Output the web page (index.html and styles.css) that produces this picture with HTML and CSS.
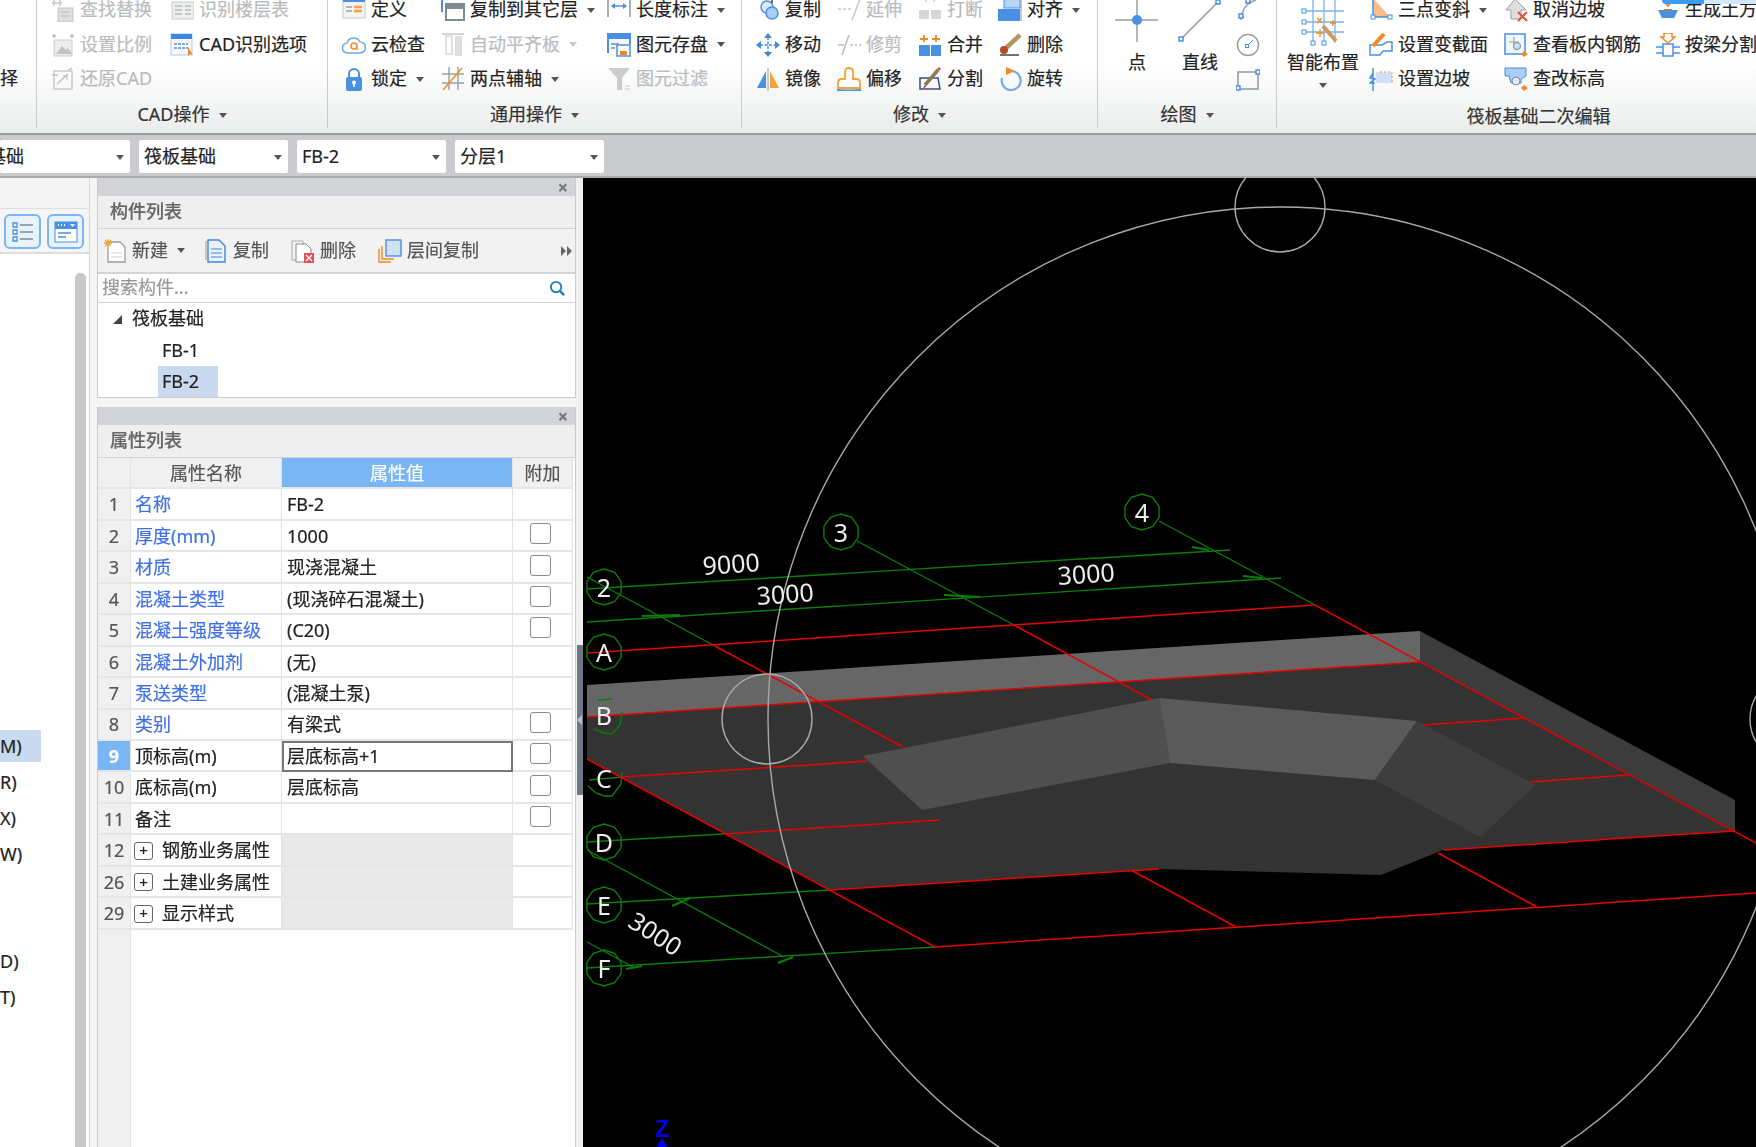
FILE: index.html
```html
<!DOCTYPE html>
<html lang="zh-CN">
<head>
<meta charset="utf-8">
<title>筏板基础</title>
<link rel="stylesheet" href="styles.css">
</head>
<body>
<svg class="defs" width="0" height="0">
  <symbol id="i-find" viewBox="0 0 24 24"><path d="M3 2v6M9 2v6M1 5h10" stroke="#c4c6c8" stroke-width="1.5"/><rect x="7" y="10" width="15" height="14" fill="#dcdedf" stroke="#c4c6c8"/><path d="M10 14h9M10 18h9" stroke="#b9bbbd"/></symbol>
  <symbol id="i-layer" viewBox="0 0 24 24"><rect x="2" y="4" width="22" height="17" fill="#eceded" stroke="#c9cbcd"/><path d="M5 8h7M5 12h7M5 16h7M15 8h6M15 12h6M15 16h6" stroke="#b9bbbd" stroke-width="1.5"/></symbol>
  <symbol id="i-scale" viewBox="0 0 24 24"><rect x="3" y="7" width="18" height="16" fill="#eceded" stroke="#c9cbcd"/><path d="M5 21l6-8 4 4 2-2 4 6z" fill="#c0c2c4"/><path d="M3 1v4M21 1v4M1 3h4M19 3h4" stroke="#bcbec0" stroke-width="1.5"/></symbol>
  <symbol id="i-restore" viewBox="0 0 24 24"><rect x="3" y="4" width="18" height="18" fill="none" stroke="#c9cbcd" stroke-width="1.5"/><path d="M1 8h6M17 4l4-3M6 17l11-10" stroke="#c0c2c4" stroke-width="1.5"/><path d="M12 9h4v4" fill="none" stroke="#b9bbbd"/></symbol>
  <symbol id="i-cad" viewBox="0 0 24 24"><rect x="1" y="1" width="21" height="21" fill="#f7f9fb" stroke="#a9cdf5"/><rect x="1" y="1" width="21" height="5" fill="#3f86dc"/><path d="M4 11h14M4 15h14" stroke="#7fa9d8" stroke-width="2" stroke-dasharray="3 1"/><path d="M18 14v9l2-2 3 1z" fill="#f08a24"/></symbol>
  <symbol id="i-def" viewBox="0 0 24 24"><rect x="1" y="-2" width="22" height="22" fill="#f3f3f3" stroke="#c5c8cb"/><rect x="1" y="-2" width="22" height="6" fill="#4a90e2"/><path d="M4 9h6M4 13h6" stroke="#9a9fa4" stroke-width="1.5"/><path d="M12 9h8M12 13h8" stroke="#f2a33a" stroke-width="2.5"/></symbol>
  <symbol id="i-cplayer" viewBox="0 0 24 24"><path d="M1 14V1h17" fill="none" stroke="#4a90e2" stroke-width="2"/><rect x="5" y="6" width="18" height="16" fill="#fff" stroke="#7e8a94" stroke-width="2"/><rect x="5" y="6" width="18" height="5" fill="#7e8a94"/></symbol>
  <symbol id="i-dim" viewBox="0 0 24 24"><path d="M1 0v19M23 0v19" stroke="#8f979e" stroke-width="1.5"/><path d="M5 8h14" stroke="#4a90e2" stroke-width="1.5"/><path d="M4 8l4-3v6zM20 8l-4-3v6z" fill="#4a90e2"/></symbol>
  <symbol id="i-cloud" viewBox="0 0 24 24"><path d="M6 20a5 5 0 0 1-1-10 7 7 0 0 1 13-1 5.500 5.500 0 0 1 0 11z" fill="#fff" stroke="#6eaeea" stroke-width="1.6"/><circle cx="12" cy="13" r="3" fill="none" stroke="#f08a24" stroke-width="1.5"/><path d="M14 15l2 2" stroke="#f08a24" stroke-width="1.5"/></symbol>
  <symbol id="i-autoal" viewBox="0 0 24 24"><path d="M1 1h22" stroke="#d4d6d7" stroke-width="2"/><rect x="5" y="3" width="6" height="18" fill="#fff" stroke="#d4d6d7" stroke-width="1.5"/><rect x="14" y="3" width="7" height="20" fill="#dcdedf"/></symbol>
  <symbol id="i-save" viewBox="0 0 24 24"><path d="M1 20V1h22v10" fill="#f7f9fb" stroke="#4a90e2" stroke-width="2"/><rect x="1" y="1" width="22" height="5" fill="#4a90e2"/><path d="M4 11h8M4 15h4" stroke="#7e8a94" stroke-width="1.5"/><rect x="10" y="12" width="13" height="11" fill="#fff" stroke="#4a90e2" stroke-width="1.5"/><rect x="13" y="18" width="7" height="4" fill="#f08a24"/></symbol>
  <symbol id="i-lock" viewBox="0 0 24 24"><path d="M7 11V7a5 5 0 0 1 10 0v4" fill="none" stroke="#4a90e2" stroke-width="2"/><rect x="4" y="10" width="16" height="14" rx="2" fill="#4a90e2"/><circle cx="12" cy="15.500" r="2" fill="#fff"/><path d="M12 16v4" stroke="#fff" stroke-width="1.500"/></symbol>
  <symbol id="i-axis" viewBox="0 0 24 24"><path d="M8 0L8 23M17 0V23M1 7h22M1 16h22" stroke="#9aa0a6" stroke-width="1.400"/><path d="M2 23L21 1" stroke="#f08a24" stroke-width="1.500"/></symbol>
  <symbol id="i-filter" viewBox="0 0 24 24"><path d="M1 1h22l-8 10v12h-5V11z" fill="#c9cbcd"/><path d="M18 19h5M18 22h5" stroke="#d4d6d7" stroke-width="1.500"/></symbol>
  <symbol id="i-copy" viewBox="0 0 24 24"><circle cx="11" cy="9" r="6" fill="#dbe9f8" stroke="#4a90e2" stroke-width="1.500"/><circle cx="16" cy="15" r="6" fill="#a9cdf5" stroke="#4a90e2" stroke-width="1.500"/><path d="M2 0h3M16 0v5" stroke="#444" stroke-width="1.500"/></symbol>
  <symbol id="i-move" viewBox="0 0 24 24"><path d="M12 4v16M4 12h16" stroke="#4a90e2" stroke-width="1.500" stroke-dasharray="3 1.500"/><path d="M12 0l4 5H8zM12 24l4-5H8zM0 12l5-4v8zM24 12l-5-4v8z" fill="#3f86dc"/></symbol>
  <symbol id="i-mirror" viewBox="0 0 24 24"><path d="M10 4v17H1z" fill="#4a90e2"/><path d="M14 4v17h9z" fill="#f2a33a"/><path d="M12 1v23" stroke="#8f979e"/></symbol>
  <symbol id="i-ext" viewBox="0 0 24 24"><path d="M1 11h3M6 11h3M11 11h3" stroke="#c9cbcd" stroke-width="1.500"/><path d="M15 22L23 1" stroke="#c4c6c8" stroke-width="1.500"/></symbol>
  <symbol id="i-trim" viewBox="0 0 24 24"><path d="M1 12h6M13 12h3M18 12h2M22 12h2" stroke="#bcbec0" stroke-width="1.500"/><path d="M5 22L12 2" stroke="#bcbec0" stroke-width="1.500"/></symbol>
  <symbol id="i-offset" viewBox="0 0 24 24"><path d="M1 21v-5q0-4 4-4h3V5q0-4 4-4t4 4v7h3q4 0 4 4v5z" fill="#fff" stroke="#f2a33a" stroke-width="1.800"/><path d="M0 23q5 1 24 0" fill="none" stroke="#4a90e2" stroke-width="2"/></symbol>
  <symbol id="i-break" viewBox="0 0 24 24"><path d="M2 1h4M18 1h4M9 4l-3-3M15 4l3-3" stroke="#d4d6d7" stroke-width="1.500"/><rect x="1" y="12" width="10" height="9" fill="#d4d6d7"/><rect x="13" y="12" width="10" height="9" fill="#d4d6d7"/></symbol>
  <symbol id="i-merge" viewBox="0 0 24 24"><rect x="1" y="12" width="11" height="11" fill="#4a90e2"/><rect x="13" y="12" width="10" height="11" fill="#4a90e2"/><path d="M6 2v7M2 6h8M18 2v7M14 6h8" stroke="#f08a24" stroke-width="1.800"/></symbol>
  <symbol id="i-split" viewBox="0 0 24 24"><path d="M2 11h18l2 11H2z" fill="none" stroke="#3d4d80" stroke-width="1.500"/><path d="M7 18L20 3" stroke="#8a7a60" stroke-width="3.500"/><path d="M7 18l-2 3 3-1z" fill="#444"/><path d="M20 3l2-2" stroke="#e0563e" stroke-width="3"/></symbol>
  <symbol id="i-align" viewBox="0 0 24 24"><rect x="6" y="-4" width="16" height="14" fill="#b9d5f6" stroke="#4a90e2"/><rect x="0" y="11" width="22" height="12" fill="#4a90e2"/><path d="M23 -4v27" stroke="#8f979e"/></symbol>
  <symbol id="i-del" viewBox="0 0 24 24"><path d="M8 15L22 2" stroke="#b4955f" stroke-width="4.500"/><circle cx="6" cy="17" r="4" fill="#b5492a"/><path d="M2 22h19" stroke="#444" stroke-width="1.500"/></symbol>
  <symbol id="i-rot" viewBox="0 0 24 24"><path d="M13 4a9.500 9.500 0 1 1-9 7" fill="none" stroke="#6eaeea" stroke-width="2.200"/><path d="M8 0l9 4-9 4z" fill="#f08a24"/></symbol>
  <symbol id="i-arc" viewBox="0 0 24 24"><path d="M5 22Q6 6 20 2" fill="none" stroke="#9aa0a6" stroke-width="1.500"/><rect x="3" y="16" width="4" height="4" fill="#fff" stroke="#4a90e2" stroke-width="1.500"/><rect x="10" y="1" width="4" height="4" fill="#fff" stroke="#4a90e2" stroke-width="1.500"/></symbol>
  <symbol id="i-circ" viewBox="0 0 24 24"><circle cx="12" cy="12" r="10.500" fill="none" stroke="#9aa0a6" stroke-width="1.500"/><path d="M11 13l6-6" stroke="#4a90e2"/><rect x="9.500" y="11.500" width="3" height="3" fill="#fff" stroke="#4a90e2"/></symbol>
  <symbol id="i-rect" viewBox="0 0 24 24"><path d="M2 5h20v17H2z" fill="none" stroke="#8f979e" stroke-width="1.500"/><rect x="0" y="19" width="4" height="4" fill="#fff" stroke="#4a90e2" stroke-width="1.500"/><rect x="20" y="3" width="4" height="4" fill="#fff" stroke="#4a90e2" stroke-width="1.500"/></symbol>
  <symbol id="i-tri" viewBox="0 0 24 24"><path d="M4 0l17 19H4z" fill="#f9bd8c"/><path d="M4 0v19h17" fill="none" stroke="#4a90e2" stroke-width="1.500"/><rect x="2" y="17" width="4" height="4" fill="#fff" stroke="#4a90e2"/><rect x="19" y="17" width="4" height="4" fill="#fff" stroke="#4a90e2"/></symbol>
  <symbol id="i-sec" viewBox="0 0 24 24"><path d="M1 22V12h12l5-3h5v9h-9l-3 4z" fill="#fff" stroke="#4a90e2" stroke-width="1.500"/><path d="M4 13L15 1" stroke="#f08a24" stroke-width="4"/></symbol>
  <symbol id="i-edge" viewBox="0 0 24 24"><path d="M4 1v23M4 6l-3 5 5 1-5 4h5" fill="none" stroke="#4a90e2" stroke-width="1.500"/><path d="M7 5l16 1v10H7z" fill="#cfe2f8"/><path d="M11 5h12v11" fill="none" stroke="#f08a24" stroke-dasharray="2 2"/></symbol>
  <symbol id="i-uncut" viewBox="0 0 24 24"><path d="M2 12L11 1l11 11h-5v9H7v-9z" fill="#dcdedf" stroke="#9aa0a6"/><path d="M14 14l9 9M23 14l-9 9" stroke="#e0563e" stroke-width="2.200"/></symbol>
  <symbol id="i-view" viewBox="0 0 24 24"><rect x="1" y="1" width="20" height="20" fill="#f3f7fb" stroke="#4a90e2" stroke-width="1.500"/><path d="M5 9h10M10 4v10q0 3 3 3" fill="none" stroke="#8f979e"/><circle cx="13" cy="13" r="3.500" fill="#cfe2f8" stroke="#7e8a94"/><path d="M20 18l4 3-4 3-3-3z" fill="#f08a24"/></symbol>
  <symbol id="i-chk" viewBox="0 0 24 24"><path d="M1 1h21v8l-5 3v4H7l-2-7H1z" fill="#a9cdf5" stroke="#4a90e2"/><circle cx="12" cy="14" r="4" fill="#dbe9f8" stroke="#7e8a94"/><path d="M20 18l4 3-4 3-3-3z" fill="#f08a24"/></symbol>
  <symbol id="i-earth" viewBox="0 0 24 24"><path d="M12 -2v7M8 3l4 5 4-5" fill="none" stroke="#f08a24" stroke-width="2"/><path d="M2 12h20l-4 8H6z" fill="#4a90e2"/><rect x="8" y="11" width="8" height="3" fill="#7e8a94"/></symbol>
  <symbol id="i-beam" viewBox="0 0 24 24"><path d="M8 0h8v4h3l-7 6-7-6h3z" fill="#fff" stroke="#f08a24" stroke-width="1.500"/><rect x="7" y="11" width="10" height="12" fill="#fff" stroke="#4a90e2" stroke-width="1.500"/><path d="M0 14h7M0 20h7M17 14h7M17 20h7" stroke="#4a90e2" stroke-width="1.500"/></symbol>
  <symbol id="i-new" viewBox="0 0 24 24"><path d="M5 3h12l5 5v15H5z" fill="#fff" stroke="#9b9b9b" stroke-width="1.300"/><path d="M8 14h11M8 18h11" stroke="#cfcfcf"/><path d="M5 0v8M1 4h8M2 1l6 6M8 1L2 7" stroke="#f2a33a" stroke-width="1.300"/></symbol>
  <symbol id="i-pcopy" viewBox="0 0 24 24"><path d="M2 2v19" stroke="#9b9b9b"/><path d="M4 1h11l6 6v16H4z" fill="#eaf3fd" stroke="#3f86dc" stroke-width="1.400"/><path d="M7 10h11M7 14h11M7 18h11" stroke="#3f86dc" stroke-width="1.200"/></symbol>
  <symbol id="i-pdel" viewBox="0 0 24 24"><path d="M1 2h11v19H1z" fill="#f4f4f4" stroke="#aaa"/><path d="M5 5h10l5 5v13H5z" fill="#fff" stroke="#888"/><rect x="13" y="14" width="10" height="10" fill="#e0505a"/><path d="M15 16l6 6M21 16l-6 6" stroke="#fff" stroke-width="1.300"/></symbol>
  <symbol id="i-pfloor" viewBox="0 0 24 24"><path d="M1 10v13h12" fill="none" stroke="#f08a24" stroke-width="1.400"/><path d="M4 7v13h12" fill="none" stroke="#f08a24" stroke-width="1.400"/><rect x="8" y="1" width="15" height="16" fill="#cfe2f8" stroke="#4a90e2" stroke-width="1.400"/></symbol>
</svg>

<header class="ribbon">
  <div class="tab-hint"></div>
  <section class="grp g0">
    <div class="cols"><div class="col c0"><div class="it"></div><div class="it"></div><div class="it"><span>择</span></div></div></div>
  </section>
  <section class="grp g1">
    <div class="cols">
      <div class="col w119">
        <div class="it off"><svg class="ico"><use href="#i-find"/></svg><span>查找替换</span></div>
        <div class="it off"><svg class="ico"><use href="#i-scale"/></svg><span>设置比例</span></div>
        <div class="it off"><svg class="ico"><use href="#i-restore"/></svg><span>还原CAD</span></div>
      </div>
      <div class="col">
        <div class="it off"><svg class="ico"><use href="#i-layer"/></svg><span>识别楼层表</span></div>
        <div class="it"><svg class="ico"><use href="#i-cad"/></svg><span>CAD识别选项</span></div>
      </div>
    </div>
    <div class="lbl">CAD操作<i class="cr"></i></div>
  </section>
  <section class="grp g2">
    <div class="cols">
      <div class="col w99">
        <div class="it"><svg class="ico"><use href="#i-def"/></svg><span>定义</span></div>
        <div class="it"><svg class="ico"><use href="#i-cloud"/></svg><span>云检查</span></div>
        <div class="it"><svg class="ico"><use href="#i-lock"/></svg><span>锁定</span><i class="cr"></i></div>
      </div>
      <div class="col w166">
        <div class="it"><svg class="ico"><use href="#i-cplayer"/></svg><span>复制到其它层</span><i class="cr"></i></div>
        <div class="it off"><svg class="ico"><use href="#i-autoal"/></svg><span>自动平齐板</span><i class="cr"></i></div>
        <div class="it"><svg class="ico"><use href="#i-axis"/></svg><span>两点辅轴</span><i class="cr"></i></div>
      </div>
      <div class="col">
        <div class="it"><svg class="ico"><use href="#i-dim"/></svg><span>长度标注</span><i class="cr"></i></div>
        <div class="it"><svg class="ico"><use href="#i-save"/></svg><span>图元存盘</span><i class="cr"></i></div>
        <div class="it off"><svg class="ico"><use href="#i-filter"/></svg><span>图元过滤</span></div>
      </div>
    </div>
    <div class="lbl">通用操作<i class="cr"></i></div>
  </section>
  <section class="grp g3">
    <div class="cols">
      <div class="col w81">
        <div class="it"><svg class="ico"><use href="#i-copy"/></svg><span>复制</span></div>
        <div class="it"><svg class="ico"><use href="#i-move"/></svg><span>移动</span></div>
        <div class="it"><svg class="ico"><use href="#i-mirror"/></svg><span>镜像</span></div>
      </div>
      <div class="col w81">
        <div class="it off"><svg class="ico"><use href="#i-ext"/></svg><span>延伸</span></div>
        <div class="it off"><svg class="ico"><use href="#i-trim"/></svg><span>修剪</span></div>
        <div class="it"><svg class="ico"><use href="#i-offset"/></svg><span>偏移</span></div>
      </div>
      <div class="col w80">
        <div class="it off"><svg class="ico"><use href="#i-break"/></svg><span>打断</span></div>
        <div class="it"><svg class="ico"><use href="#i-merge"/></svg><span>合并</span></div>
        <div class="it"><svg class="ico"><use href="#i-split"/></svg><span>分割</span></div>
      </div>
      <div class="col">
        <div class="it"><svg class="ico"><use href="#i-align"/></svg><span>对齐</span><i class="cr"></i></div>
        <div class="it"><svg class="ico"><use href="#i-del"/></svg><span>删除</span></div>
        <div class="it"><svg class="ico"><use href="#i-rot"/></svg><span>旋转</span></div>
      </div>
    </div>
    <div class="lbl">修改<i class="cr"></i></div>
  </section>
  <section class="grp g4">
    <div class="cols">
      <div class="big w58">
        <svg class="big-ico" viewBox="0 0 58 55"><path d="M7 27h43M29 7v42" stroke="#9aa0a6" stroke-width="1.500"/><circle cx="29" cy="27" r="5" fill="#4a90e2"/></svg>
        <span>点</span>
      </div>
      <div class="big w68">
        <svg class="big-ico" viewBox="0 0 68 55"><path d="M15 46L52 9" stroke="#8f979e" stroke-width="1.500"/><rect x="13" y="44" width="4" height="4" fill="#fff" stroke="#4a90e2" stroke-width="1.500"/><rect x="50" y="7" width="4" height="4" fill="#fff" stroke="#4a90e2" stroke-width="1.500"/></svg>
        <span>直线</span>
      </div>
      <div class="col shift2">
        <div class="it"><svg class="ico"><use href="#i-arc"/></svg></div>
        <div class="it"><svg class="ico"><use href="#i-circ"/></svg></div>
        <div class="it"><svg class="ico"><use href="#i-rect"/></svg></div>
      </div>
    </div>
    <div class="lbl">绘图<i class="cr"></i></div>
  </section>
  <section class="grp g5">
    <div class="cols">
      <div class="big w92">
        <svg class="big-ico" viewBox="0 0 92 55"><path d="M36 7v43M47 7v43M58 7v43M26 18h41M26 29h41M26 39h41" stroke="#7db2ec" stroke-width="1.300"/><path d="M46 33l13 15" stroke="#c89a62" stroke-width="4"/><path d="M40 25l5 5M45 25l-5 5M39 40h8M43 36v8M53 30h6M56 27v6" stroke="#f08a24" stroke-width="1.300"/><rect x="25" y="16" width="4" height="4" fill="#fff" stroke="#4a90e2"/><rect x="25" y="27" width="4" height="4" fill="#fff" stroke="#4a90e2"/><rect x="25" y="37" width="4" height="4" fill="#fff" stroke="#4a90e2"/><rect x="34" y="48" width="4" height="4" fill="#fff" stroke="#4a90e2"/><rect x="45" y="48" width="4" height="4" fill="#fff" stroke="#4a90e2"/></svg>
        <span>智能布置</span>
        <i class="cr big-cr"></i>
      </div>
      <div class="col w135">
        <div class="it"><svg class="ico"><use href="#i-tri"/></svg><span>三点变斜</span><i class="cr"></i></div>
        <div class="it"><svg class="ico"><use href="#i-sec"/></svg><span>设置变截面</span></div>
        <div class="it"><svg class="ico"><use href="#i-edge"/></svg><span>设置边坡</span></div>
      </div>
      <div class="col w152">
        <div class="it"><svg class="ico"><use href="#i-uncut"/></svg><span>取消边坡</span></div>
        <div class="it"><svg class="ico"><use href="#i-view"/></svg><span>查看板内钢筋</span></div>
        <div class="it"><svg class="ico"><use href="#i-chk"/></svg><span>查改标高</span></div>
      </div>
      <div class="col">
        <div class="it"><svg class="ico"><use href="#i-earth"/></svg><span>生成土方</span></div>
        <div class="it"><svg class="ico"><use href="#i-beam"/></svg><span>按梁分割</span></div>
      </div>
    </div>
    <div class="lbl lbl-low">筏板基础二次编辑</div>
  </section>
</header>

<nav class="combos">
  <div class="combo first"><span class="clip">基础</span><i class="cr"></i></div>
  <div class="combo"><span>筏板基础</span><i class="cr"></i></div>
  <div class="combo"><span>FB-2</span><i class="cr"></i></div>
  <div class="combo"><span>分层1</span><i class="cr"></i></div>
</nav>

<main class="work">
  <aside class="side">
    <div class="side-top"></div>
    <div class="side-btns">
      <button class="sbtn" type="button"><svg viewBox="0 0 24 24" width="24" height="24"><path d="M9 5h13M9 12h13M9 19h13" stroke="#7e8a94" stroke-width="1.300"/><path d="M2 3h4v4H2zM2 10h4v4H2zM2 17h4v4H2z" fill="none" stroke="#4a90e2" stroke-width="1.300"/></svg></button>
      <button class="sbtn" type="button"><svg viewBox="0 0 24 24" width="24" height="24"><rect x="1" y="2" width="22" height="20" fill="#fff" stroke="#4a90e2"/><rect x="1" y="2" width="22" height="7" fill="#4a90e2"/><path d="M4 5h1M7 5h1M10 5h1" stroke="#fff" stroke-width="2"/><path d="M16 4h5l-2.500 3z" fill="#fff"/><path d="M4 13h13M4 17h8" stroke="#4a90e2" stroke-width="1.500"/></svg></button>
    </div>
    <div class="side-body">
      <ul class="side-list">
        <li class="sel">M)</li>
        <li>R)</li>
        <li>X)</li>
        <li>W)</li>
        <li class="gap"></li>
        <li>D)</li>
        <li>T)</li>
      </ul>
      <div class="side-scroll"></div>
    </div>
  </aside>

  <div class="panels">
    <section class="panel p-top">
      <div class="ptitle"><span class="x">×</span></div>
      <h2 class="phead">构件列表</h2>
      <div class="ptools">
        <div class="tool t-new"><svg class="tico"><use href="#i-new"/></svg><span>新建</span><i class="cr"></i></div>
        <div class="tool t-cp"><svg class="tico"><use href="#i-pcopy"/></svg><span>复制</span></div>
        <div class="tool t-del"><svg class="tico"><use href="#i-pdel"/></svg><span>删除</span></div>
        <div class="tool"><svg class="tico"><use href="#i-pfloor"/></svg><span>层间复制</span></div>
        <svg class="more" viewBox="0 0 12 10" width="12" height="10"><path d="M0 0l5 5-5 5zM6 0l5 5-5 5z" fill="#666"/></svg>
      </div>
      <div class="psearch"><span>搜索构件...</span>
        <svg viewBox="0 0 18 18" width="17" height="17"><circle cx="7.500" cy="7.500" r="5.500" fill="none" stroke="#1d7fc4" stroke-width="2"/><path d="M11.500 11.500L16 16" stroke="#1d7fc4" stroke-width="2.500"/></svg>
      </div>
      <div class="tree">
        <div class="tree-root"><i class="tri"></i><span>筏板基础</span></div>
        <div class="tree-leaf"><span>FB-1</span></div>
        <div class="tree-leaf"><span class="on">FB-2</span></div>
      </div>
    </section>

    <section class="panel p-bot">
      <div class="ptitle"><span class="x">×</span></div>
      <h2 class="phead">属性列表</h2>
      <div class="ptable">
        <div class="grid">
          <div class="c n hd"></div><div class="c hd ctr">属性名称</div><div class="c hd-on ctr">属性值</div><div class="c hd ctr">附加</div>

          <div class="c n">1</div><div class="c nm lk">名称</div><div class="c v">FB-2</div><div class="c"></div>
          <div class="c n">2</div><div class="c nm lk">厚度(mm)</div><div class="c v">1000</div><div class="c ck"><input type="checkbox"></div>
          <div class="c n">3</div><div class="c nm lk">材质</div><div class="c v">现浇混凝土</div><div class="c ck"><input type="checkbox"></div>
          <div class="c n">4</div><div class="c nm lk">混凝土类型</div><div class="c v">(现浇碎石混凝土)</div><div class="c ck"><input type="checkbox"></div>
          <div class="c n">5</div><div class="c nm lk">混凝土强度等级</div><div class="c v">(C20)</div><div class="c ck"><input type="checkbox"></div>
          <div class="c n">6</div><div class="c nm lk">混凝土外加剂</div><div class="c v">(无)</div><div class="c"></div>
          <div class="c n">7</div><div class="c nm lk">泵送类型</div><div class="c v">(混凝土泵)</div><div class="c"></div>
          <div class="c n">8</div><div class="c nm lk">类别</div><div class="c v">有梁式</div><div class="c ck"><input type="checkbox"></div>
          <div class="c n n-on">9</div><div class="c nm">顶标高(m)</div><div class="c v v-on">层底标高+1</div><div class="c ck"><input type="checkbox"></div>
          <div class="c n">10</div><div class="c nm">底标高(m)</div><div class="c v">层底标高</div><div class="c ck"><input type="checkbox"></div>
          <div class="c n">11</div><div class="c nm">备注</div><div class="c v"></div><div class="c ck"><input type="checkbox"></div>
          <div class="c n">12</div><div class="c nm ex"><i class="plus">+</i>钢筋业务属性</div><div class="c v gr"></div><div class="c"></div>
          <div class="c n">26</div><div class="c nm ex"><i class="plus">+</i>土建业务属性</div><div class="c v gr"></div><div class="c"></div>
          <div class="c n">29</div><div class="c nm ex"><i class="plus">+</i>显示样式</div><div class="c v gr"></div><div class="c"></div>
        </div>
        <div class="tail"><div class="tail-n"></div></div>
      </div>
    </section>
  </div>

  <div class="split"><div class="split-h"><i></i></div></div>

  <div class="view">
    <svg class="scene" viewBox="583 178 1173 969" width="1173" height="969">
      <defs>
        <polygon id="hub" points="0,-18 10.600,-14.600 17.100,-5.600 17.100,5.600 10.600,14.600 0,18 -10.600,14.600 -17.100,5.600 -17.100,-5.600 -10.600,-14.600"/>
      </defs>
      <g class="solid">
        <path fill="#666" d="M587 685L1420 631V662L587 717Z"/>
        <path fill="#3c3c3c" d="M1420 631L1735 800V831L1420 662Z"/>
        <path fill="#333" d="M587 717L1420 662L1735 831L1443 850L1381 875L1159 869L830 890L587 759Z"/>
        <path fill="#4f4f4f" d="M863 756L1159 698L1170 763L922 810Z"/>
        <path fill="#5a5a5a" d="M1159 698L1417 721L1375 780L1170 763Z"/>
        <path fill="#3e3e3e" d="M1417 721L1536 785L1480 837L1375 780Z"/>
      </g>
      <g class="green">
        <path d="M587 589L1230 550"/>
        <path d="M587 622L1281 578"/>
        <path d="M587 577L713 645"/>
        <path d="M857 541L1014 625"/>
        <path d="M1159 521L1315 605"/>
        <path d="M587 842L723 834"/>
        <path d="M587 904L830 890"/>
        <path d="M587 968L935 947"/>
        <path d="M587 850L784 957"/>
        <path d="M587 942L633 967"/>
        <path d="M589 780L622 777"/>
      </g>
      <g class="green tick">
        <path d="M1192 547L1209 550"/>
        <path d="M1243 576L1262 578"/>
        <path d="M944 595L980 597"/>
        <path d="M642 616L680 615"/>
        <path d="M672 906L690 898"/>
        <path d="M778 963L793 957"/>
        <path d="M626 969L642 966"/>
      </g>
      <g class="red">
        <path d="M587 653L1315 605"/>
        <path d="M587 717L1420 662"/>
        <path d="M622 777L868 761"/>
        <path d="M1423 725L1525 718"/>
        <path d="M723 834L940 820"/>
        <path d="M1529 782L1629 775"/>
        <path d="M830 890L1159 869"/>
        <path d="M1443 850L1735 831"/>
        <path d="M935 947L1756 893"/>
        <path d="M713 645L903 747"/>
        <path d="M1014 625L1152 700"/>
        <path d="M1315 605L1756 843"/>
        <path d="M587 759L935 947"/>
        <path d="M1131 870L1236 927"/>
        <path d="M1438 853L1537 907"/>
      </g>
      <g class="white-lines">
        <circle cx="1280" cy="719" r="512"/>
        <circle cx="767" cy="719" r="45"/>
        <circle cx="1280" cy="207" r="45"/>
        <circle cx="1795" cy="719" r="45"/>
      </g>
      <g class="axes">
        <use href="#hub" x="604" y="587"/>
        <use href="#hub" x="604" y="652"/>
        <path d="M598 700L612 699M622 712L620 725L612 734L604 733L594 729"/>
        <path d="M622 772L621 784L612 796L604 796L596 793L588 786"/>
        <use href="#hub" x="604" y="842"/>
        <use href="#hub" x="604" y="905"/>
        <use href="#hub" x="604" y="968"/>
        <use href="#hub" x="841" y="532"/>
        <use href="#hub" x="1142" y="512"/>
      </g>
      <g class="labels">
        <text x="604" y="587">2</text>
        <text x="604" y="652">A</text>
        <text x="604" y="715">B</text>
        <text x="604" y="778">C</text>
        <text x="604" y="842">D</text>
        <text x="604" y="905">E</text>
        <text x="604" y="968">F</text>
        <text x="841" y="532">3</text>
        <text x="1142" y="512">4</text>
        <text x="731" y="563" transform="rotate(-4 731 563)">9000</text>
        <text x="785" y="593" transform="rotate(-4 785 593)">3000</text>
        <text x="1086" y="573" transform="rotate(-4 1086 573)">3000</text>
        <text x="656" y="933" transform="rotate(33 656 933)">3000</text>
      </g>
      <text class="zlab" x="662" y="1128">Z</text>
      <path class="zcone" d="M662 1138L668 1147H656Z"/>
    </svg>
  </div>
</main>
</body>
</html>
```
FILE: styles.css
```css
* { box-sizing: border-box; }
html, body { margin: 0; height: 100%; }
body {
  width: 1756px;
  height: 1147px;
  overflow: hidden;
  display: flex;
  flex-direction: column;
  background: #fff;
  color: #222;
  font: 18px/1.2 "Noto Sans", "Noto Sans CJK SC", sans-serif;
  -webkit-text-stroke: 0.2px;
  filter: blur(0.45px);
}
.defs { position: absolute; }
i { font-style: normal; }

/* ribbon */
.ribbon {
  position: relative;
  display: flex;
  height: 135px;
  flex: none;
  overflow: hidden;
  background: linear-gradient(#fff 0, #fff 62px, #ebeded 133px);
  border-bottom: 2px solid #9b9d9f;
}
.tab-hint {
  position: absolute;
  top: 0; left: 1662px; right: 0;
  height: 4px;
  background: linear-gradient(90deg, #3d9bf0 45%, #d4e8fb 45%);
  border-radius: 0 0 0 5px;
}
.grp {
  flex: none;
  display: flex;
  flex-direction: column;
  height: 128px;
  border-right: 1px solid #c9cbcc;
}
.g0 { width: 37px; }
.g1 { width: 291px; padding-left: 14px; }
.g2 { width: 414px; padding-left: 14px; }
.g3 { width: 356px; padding-left: 14px; }
.g4 { width: 179px; padding-left: 10px; }
.g5 { width: 523px; border-right: 0; }
.cols { display: flex; height: 103.5px; margin-top: -7px; flex: none; }
.col { display: flex; flex-direction: column; flex: none; }
.c0 { width: 37px; }
.w119 { width: 119px; }
.w99 { width: 99px; }
.w166 { width: 166px; }
.w81 { width: 81px; }
.w80 { width: 80px; }
.w135 { width: 135px; }
.w152 { width: 152px; }
.w58 { width: 58px; }
.w68 { width: 68px; }
.w92 { width: 92px; }
.shift2 { margin-left: 2px; }
.it {
  display: flex;
  align-items: center;
  flex: none;
  height: 34.5px;
  white-space: nowrap;
  color: #222;
}
.it.off { color: #b9bbbd; }
.ico { width: 24px; height: 24px; flex: none; margin-right: 5px; }
.cr {
  display: inline-block;
  flex: none;
  width: 0; height: 0;
  border-left: 4.5px solid transparent;
  border-right: 4.5px solid transparent;
  border-top: 5px solid #555;
  margin-left: 9px;
  vertical-align: middle;
}
.it.off .cr { border-top-color: #c4c6c8; }
.big { display: flex; flex-direction: column; align-items: center; flex: none; }
.big-ico { display: block; width: 100%; height: 55px; flex: none; }
.big span { line-height: 28px; }
.big-cr { margin: 7px 0 0; }
.lbl {
  height: 37px;
  display: flex;
  align-items: center;
  justify-content: center;
  color: #333;
  flex: none;
}
.g1 .lbl, .g2 .lbl, .g3 .lbl { margin-left: -14px; }
.g4 .lbl { margin-left: -10px; }
.lbl-low { padding-top: 4px; }

/* combo bar */
.combos {
  display: flex;
  gap: 9px;
  flex: none;
  height: 43px;
  padding-top: 5px;
  background: #c9cbce;
  border-bottom: 2px solid #a8aaad;
}
.combo {
  width: 149px;
  height: 33px;
  display: flex;
  align-items: center;
  justify-content: space-between;
  padding: 1px 6px 0 5px;
  background: #fff;
  border-radius: 2px;
  overflow: hidden;
}
.combo.first { width: 130px; padding-left: 0; }
.clip { margin-left: -12px; }

/* workspace */
.work { display: flex; flex: 1; min-height: 0; }
.side {
  width: 90px;
  flex: none;
  display: flex;
  flex-direction: column;
  background: #fff;
  border-right: 1px solid #d4d4d4;
}
.side-top { height: 31px; flex: none; background: #f5f5f5; border-bottom: 1px solid #ddd; }
.side-btns {
  height: 45px;
  flex: none;
  display: flex;
  gap: 6px;
  padding: 5px 0 0 4px;
  background: #f5f5f5;
  border-bottom: 2px solid #ddd;
}
.sbtn {
  width: 37px;
  height: 35px;
  padding: 0;
  display: flex;
  align-items: center;
  justify-content: center;
  background: #e8f2fd;
  border: 2px solid #7ab5f5;
  border-radius: 6px;
}
.side-body { flex: 1; display: flex; min-height: 0; }
.side-list {
  list-style: none;
  margin: 0;
  padding: 476px 0 0;
  flex: 1;
  display: flex;
  flex-direction: column;
  gap: 4px;
  overflow: hidden;
}
.side-list li { height: 32px; line-height: 32px; flex: none; width: 41px; }
.side-list li.sel { background: #c8d9f0; }
.side-list li.gap { height: 67px; }
.side-scroll {
  width: 11px;
  margin: 19px 3px 0 0;
  background: #c8c8c8;
  border-radius: 5px 5px 0 0;
  flex: none;
}

.panels {
  width: 486px;
  flex: none;
  display: flex;
  flex-direction: column;
  gap: 9px;
  padding-left: 7px;
  background: #f5f5f5;
}
.panel { display: flex; flex-direction: column; background: #fff; border: 1px solid #c9cbcd; border-top: 0; }
.p-top { height: 220px; flex: none; }
.p-bot { flex: 1; min-height: 0; border-bottom: 0; }
.ptitle {
  height: 18px;
  flex: none;
  display: flex;
  justify-content: flex-end;
  align-items: center;
  padding-right: 7px;
  background: #d3d4d8;
}
.x { color: #777; font-size: 18px; line-height: 18px; font-weight: 700; }
.phead {
  margin: 0;
  height: 33px;
  flex: none;
  display: flex;
  align-items: center;
  padding-left: 12px;
  background: #efefef;
  border-bottom: 1px solid #d4d4d6;
  color: #666;
  font-size: 18px;
  font-weight: 500;
}
.ptools {
  height: 45px;
  flex: none;
  display: flex;
  align-items: center;
  padding-left: 5px;
  background: #f2f2f2;
  border-bottom: 2px solid #d4d4d6;
  color: #555;
}
.tool { display: flex; align-items: center; margin-right: 22px; }
.t-new { margin-right: 19px; }
.t-cp { margin-right: 22px; }
.t-del { margin-right: 22px; }
.tico { width: 24px; height: 24px; margin-right: 5px; flex: none; }
.more { margin-left: auto; margin-right: 2px; }
.psearch {
  height: 29px;
  flex: none;
  display: flex;
  align-items: center;
  justify-content: space-between;
  padding: 0 9px 0 4px;
  color: #999;
  border-bottom: 1px solid #cfd3d8;
}
.tree { flex: 1; }
.tree-root { display: flex; align-items: center; height: 32px; padding-left: 15px; }
.tri {
  width: 0; height: 0;
  margin-right: 10px;
  border-left: 9px solid transparent;
  border-bottom: 9px solid #444;
}
.tree-leaf { height: 31px; padding-left: 60px; display: flex; }
.tree-leaf span { padding: 0 4px; line-height: 31px; width: 60px; }
.tree-leaf .on { background: #c8d9f0; }

.ptable { flex: 1; display: flex; flex-direction: column; min-height: 0; }
.grid {
  display: grid;
  grid-template-columns: 33px 151px 231px 60px;
  grid-auto-rows: 31.44px;
  flex: none;
}
.c {
  display: flex;
  align-items: center;
  padding-top: 2px;
  border-right: 1px solid #e2e2e2;
  border-bottom: 2px solid #e6e6e6;
  background: #fff;
  white-space: nowrap;
  overflow: hidden;
}
.n { justify-content: center; background: #f0f0f0; color: #555; }
.hd { background: #f0f0f0; color: #555; }
.hd-on { background: #7ab5f5; color: #fff; }
.ctr { justify-content: center; }
.nm { padding-left: 4px; }
.lk { color: #3f6fe6; }
.v { padding-left: 5px; }
.n-on { background: #7ab5f5; color: #fff; font-weight: 700; }
.v-on { border: 2px solid #777; padding-left: 3px; padding-top: 0; }
.gr { background: #e9e9e9; }
.ck { justify-content: center; padding: 0 4px 2px 0; }
.ck input {
  appearance: none;
  width: 21px;
  height: 21px;
  margin: 0 0 2px;
  background: #fff;
  border: 1.5px solid #8a8a8a;
  border-radius: 3px;
}
.ex { padding-left: 3px; }
.plus {
  width: 19px;
  height: 18px;
  margin-right: 9px;
  display: flex;
  align-items: center;
  justify-content: center;
  border: 1.5px solid #666;
  border-radius: 3px;
  font-size: 15px;
  line-height: 1;
  flex: none;
}
.tail { flex: 1; min-height: 0; }
.tail-n { width: 33px; height: 100%; background: #f0f0f0; border-right: 1px solid #e2e2e2; }

.split { width: 7px; flex: none; background: #f0f0f0; padding: 467px 0 0 1px; }
.split-h {
  height: 150px;
  background: #6c7886;
  display: flex;
  align-items: center;
}
.split-h i {
  width: 0; height: 0;
  border-top: 5px solid transparent;
  border-bottom: 5px solid transparent;
  border-right: 5px solid #b9c0c8;
}

.view { flex: 1; min-width: 0; background: #000; overflow: hidden; }
.scene { display: block; }
.green path { fill: none; stroke: #0a7d0a; stroke-width: 1.4; }
.green.tick path { stroke-width: 2.2; }
.red path { fill: none; stroke: #e60000; stroke-width: 1.5; }
.white-lines circle { fill: none; stroke: #a9a9a9; stroke-width: 1.4; }
.axes use, .axes path { fill: none; stroke: #0a7d0a; stroke-width: 1.4; }
.labels text {
  fill: #eee;
  font: 25px "Noto Sans", sans-serif;
  text-anchor: middle;
  dominant-baseline: central;
  -webkit-text-stroke: 0;
}
.zlab { fill: #0000e0; font: 700 24px "Liberation Sans", sans-serif; text-anchor: middle; dominant-baseline: central; }
.zcone { fill: #0000e0; }
```
